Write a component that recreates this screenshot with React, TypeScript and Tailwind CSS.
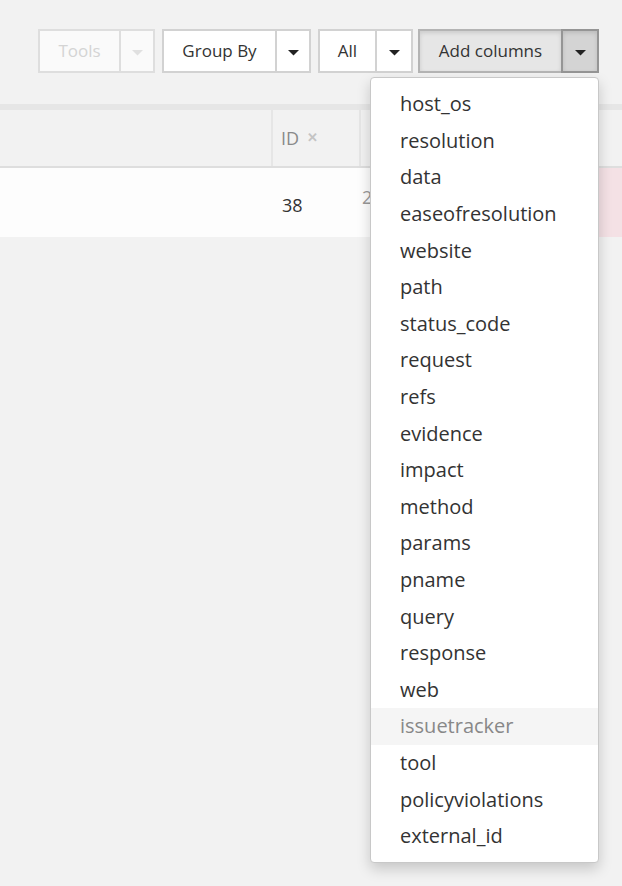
import React from "react";

const items = [
  "host_os",
  "resolution",
  "data",
  "easeofresolution",
  "website",
  "path",
  "status_code",
  "request",
  "refs",
  "evidence",
  "impact",
  "method",
  "params",
  "pname",
  "query",
  "response",
  "web",
  "issuetracker",
  "tool",
  "policyviolations",
  "external_id",
];

function Caret({ color }: { color: string }) {
  return (
    <svg width="11" height="6" viewBox="0 0 11 6" className="mt-[3px]">
      <path d="M0 0 L11 0 L5.5 5.5 Z" fill={color} />
    </svg>
  );
}

export default function App() {
  return (
    <div
      className="min-h-[886px] w-[622px] overflow-hidden bg-[#f2f2f2] text-[#333]"
      style={{ fontFamily: '"Open Sans", "Noto Sans", sans-serif' }}
    >
      {/* toolbar */}
      <div className="flex justify-end pt-[29px] pr-[23px]">
        {/* Tools */}
        <div className="flex h-[44px] border-2 border-[#dedede] bg-[#fafafa]">
          <div className="flex w-[79px] items-center justify-center text-[17px] text-[#d4d4d4]">
            Tools
          </div>
          <div className="flex w-[34px] items-center justify-center border-l-2 border-[#dedede]">
            <Caret color="#e0e0e0" />
          </div>
        </div>
        {/* Group By */}
        <div className="ml-[7px] flex h-[44px] border-2 border-[#d2d2d2] bg-white">
          <div className="flex w-[111px] items-center justify-center text-[17px]">
            Group By
          </div>
          <div className="flex w-[34px] items-center justify-center border-l-2 border-[#d2d2d2]">
            <Caret color="#222" />
          </div>
        </div>
        {/* All */}
        <div className="ml-[7px] flex h-[44px] border-2 border-[#d2d2d2] bg-white">
          <div className="flex w-[55px] items-center justify-center text-[17px]">
            All
          </div>
          <div className="flex w-[36px] items-center justify-center border-l-2 border-[#d2d2d2]">
            <Caret color="#222" />
          </div>
        </div>
        {/* Add columns */}
        <div className="relative ml-[5px] flex h-[44px]">
          <div className="flex w-[143px] items-center justify-center border-2 border-r-0 border-[#b4b4b4] bg-[#e6e6e6] text-[17px] shadow-[inset_0_2px_4px_rgba(0,0,0,0.12)]">
            Add columns
          </div>
          <div className="flex w-[38px] items-center justify-center border-2 border-[#959595] bg-[#d4d4d4] shadow-[inset_0_2px_4px_rgba(0,0,0,0.12)]">
            <Caret color="#222" />
          </div>
          {/* dropdown menu */}
          <div className="absolute top-[48px] right-0 z-10 w-[229px] rounded-[4px] border border-[#c8c8c8] bg-white py-[8px] shadow-[0_6px_14px_rgba(0,0,0,0.18)]">
            {items.map((it) => (
              <div
                key={it}
                className={
                  it === "issuetracker"
                    ? "flex h-[36.6px] items-center bg-[#f5f5f5] pl-[29px] text-[20px] text-[#888]"
                    : "flex h-[36.6px] items-center pl-[29px] text-[20px] text-[#333]"
                }
              >
                {it}
              </div>
            ))}
          </div>
        </div>
      </div>

      {/* table */}
      <div className="mt-[31px]">
        <div className="h-[6px] bg-[#e6e6e6]" />
        <div className="flex h-[58px] border-b-2 border-[#dedede] bg-[#f2f2f2]">
          <div className="w-[273px] border-r-2 border-[#e6e6e6]" />
          <div className="flex w-[88px] items-center gap-[8px] border-r-2 border-[#e6e6e6] pl-[8px] text-[18px] text-[#8a8a8a]">
            <span>ID</span>
            <span className="text-[13px] font-bold text-[#c4c4c4]">✕</span>
          </div>
          <div className="flex-1" />
        </div>
        <div className="flex h-[69px] bg-[#fdfdfd]">
          <div className="w-[273px]" />
          <div className="flex w-[88px] items-center pl-[9px] pt-[6px] text-[18px] text-[#333]">
            38
          </div>
          <div className="flex w-[150px] items-start pt-[16px] pl-[1px] text-[18px] text-[#999]">
            2
          </div>
          <div className="flex-1 bg-[#f4e1e5]" />
        </div>
      </div>
    </div>
  );
}
